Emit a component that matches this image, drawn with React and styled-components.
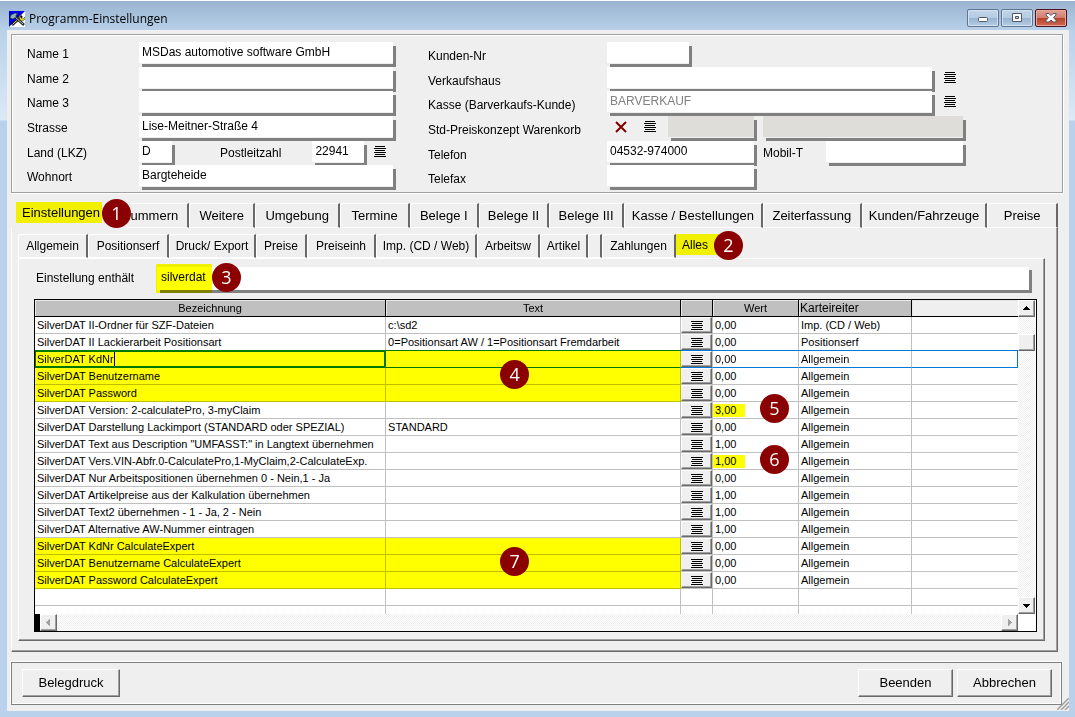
import React, { useState } from 'react';
import styled, { createGlobalStyle, css } from 'styled-components';

const GlobalStyle = createGlobalStyle`
  * {
    box-sizing: border-box;
  }
  body {
    margin: 0;
    background: #efefef;
    font-family: 'Liberation Sans', Arial, sans-serif;
    font-size: 12px;
    color: #000;
  }
  button, input {
    font: inherit;
    color: inherit;
    border-radius: 0;
  }
`;

const rows = [
  { name: 'SilverDAT II-Ordner für SZF-Dateien', text: 'c:\\sd2', value: '0,00', tab: 'Imp. (CD / Web)' },
  { name: 'SilverDAT II Lackierarbeit Positionsart', text: '0=Positionsart AW / 1=Positionsart Fremdarbeit', value: '0,00', tab: 'Positionserf' },
  { name: 'SilverDAT KdNr', value: '0,00', tab: 'Allgemein', marked: true, active: true },
  { name: 'SilverDAT Benutzername', value: '0,00', tab: 'Allgemein', marked: true, textBadge: 4 },
  { name: 'SilverDAT Password', value: '0,00', tab: 'Allgemein', marked: true },
  { name: 'SilverDAT Version: 2-calculatePro, 3-myClaim', value: '3,00', tab: 'Allgemein', valueBadge: 5 },
  { name: 'SilverDAT Darstellung Lackimport (STANDARD oder SPEZIAL)', text: 'STANDARD', value: '0,00', tab: 'Allgemein' },
  { name: 'SilverDAT Text aus Description "UMFASST:" in Langtext übernehmen', value: '1,00', tab: 'Allgemein' },
  { name: 'SilverDAT Vers.VIN-Abfr.0-CalculatePro,1-MyClaim,2-CalculateExp.', value: '1,00', tab: 'Allgemein', valueBadge: 6 },
  { name: 'SilverDAT Nur Arbeitspositionen übernehmen 0 - Nein,1 - Ja', value: '0,00', tab: 'Allgemein' },
  { name: 'SilverDAT Artikelpreise aus der Kalkulation übernehmen', value: '1,00', tab: 'Allgemein' },
  { name: 'SilverDAT Text2 übernehmen - 1 - Ja, 2 - Nein', value: '1,00', tab: 'Allgemein' },
  { name: 'SilverDAT Alternative AW-Nummer eintragen', value: '1,00', tab: 'Allgemein' },
  { name: 'SilverDAT KdNr CalculateExpert', value: '0,00', tab: 'Allgemein', marked: true },
  { name: 'SilverDAT Benutzername CalculateExpert', value: '0,00', tab: 'Allgemein', marked: true, textBadge: 7 },
  { name: 'SilverDAT Password CalculateExpert', value: '0,00', tab: 'Allgemein', marked: true },
];

const mainTabs = [
  { label: 'Nummern', size: 78 },
  { label: 'Weitere', size: 65 },
  { label: 'Umgebung', size: 85 },
  { label: 'Termine', size: 69 },
  { label: 'Belege I', size: 68 },
  { label: 'Belege II', size: 70 },
  { label: 'Belege III', size: 74 },
  { label: 'Kasse / Bestellungen', size: 141 },
  { label: 'Zeiterfassung', size: 99 },
  { label: 'Kunden/Fahrzeuge', size: 127 },
  { label: 'Preise', size: 70 },
];

const subTabs = [
  { label: 'Allgemein', size: 70 },
  { label: 'Positionserf', size: 81 },
  { label: 'Druck/ Export', size: 87 },
  { label: 'Preise', size: 51 },
  { label: 'Preiseinh', size: 69 },
  { label: 'Imp. (CD / Web)', size: 101 },
  { label: 'Arbeitsw', size: 63 },
  { label: 'Artikel', size: 48 },
  { label: '', size: 14 },
  { label: 'Zahlungen', size: 74 },
];

const raised = css`
  border: 1px solid;
  border-color: #fff #696969 #696969 #fff;
  box-shadow: inset -1px -1px 0 #a0a0a0;
`;

const Window = styled.div`
  min-height: 100vh;
  display: flex;
  flex-direction: column;
  padding: 0 6px 6px 7px;
  background: linear-gradient(#99b4d1, #b9d1ea 30px, #dce9f6 119px, #b9d1ea 120px);
  border-top: 1px solid #fff;
`;

const TitleBar = styled.header`
  height: 29px;
  display: flex;
  align-items: center;
  gap: 4px;
  padding: 6px 2px 0;
`;

const Title = styled.h1`
  flex: 1;
  margin: 0;
  font: 12px/16px 'Open Sans', 'Noto Sans', sans-serif;
`;

const WindowButtons = styled.div`
  display: flex;
  gap: 2px;
  align-self: flex-start;
  padding-top: 2px;
`;

const WindowButton = styled.button`
  width: 32px;
  height: 18px;
  padding: 0;
  display: grid;
  place-items: center;
  border: 1px solid ${({ $close }) => ($close ? '#4a1420' : '#5f7590')};
  border-radius: 2px;
  box-shadow: inset 0 0 0 1px ${({ $close }) => ($close ? '#e8a598' : '#d3e1f0')};
  background: ${({ $close }) =>
    $close
      ? 'linear-gradient(#e3a196, #d07d6f 50%, #b8402a 50%, #cf6a50)'
      : 'linear-gradient(#c3d6ea, #b4cbe2 50%, #98b3cf 50%, #b4cde6)'};
`;

const Client = styled.main`
  flex: 1;
  display: flex;
  flex-direction: column;
  padding: 4px 6px 6px 4px;
  background: #efefef;
`;

const AddressPanel = styled.section`
  display: flex;
  height: 159px;
  padding: 7px 15px 0;
  border: 1px solid #a0a0a0;
  box-shadow: inset 1px 1px 0 #fff, 1px 1px 0 #fff;
`;

const FormGrid = styled.div`
  display: grid;
  grid-template-columns: ${({ $labelWidth }) => $labelWidth}px minmax(0, 1fr);
  grid-template-rows: 25px 24px 25px 25px 24px 25px;
  flex: ${({ $wide }) => ($wide ? '1' : '0 1 401px')};
`;

const Label = styled.label`
  padding-top: ${({ $low }) => ($low ? 6 : 4)}px;
  font-size: 12px;
  line-height: 16px;
  white-space: nowrap;
`;

const FieldLine = styled.div`
  display: flex;
  align-items: flex-start;
  padding-right: ${({ $end }) => $end || 0}px;
`;

const Field = styled.input`
  width: ${({ $width }) => ($width ? `${$width}px` : 'auto')};
  flex: ${({ $width }) => ($width ? 'none' : '1')};
  min-width: 0;
  height: 21px;
  padding: 0 3px 1px;
  border: 0;
  outline: 0;
  font-size: 12px;
  background: ${({ disabled }) => (disabled ? '#deddd9' : '#fff')};
  color: ${({ $muted }) => ($muted ? '#808080' : '#000')};
  box-shadow: 0 1px 0 #efefef, 3px 4px 0 #808080;
`;

const IconButton = styled.button`
  width: 12px;
  height: 21px;
  padding: 0;
  border: 0;
  background: none;
  display: grid;
  place-items: center;
`;

const Spacer = styled.span`
  width: ${({ $width }) => $width}px;
`;

const Badge = styled.span`
  position: absolute;
  z-index: 2;
  width: 29px;
  height: 29px;
  border-radius: 50%;
  background: #8b0000;
  color: #fff;
  font: 18px/28px 'Open Sans', 'Noto Sans', sans-serif;
  text-align: center;
`;

const TabBook = styled.section`
  flex: 1;
  display: flex;
  flex-direction: column;
  margin-top: 9px;
  margin-right: 5px;
`;

const TabRow = styled.nav`
  display: flex;
  height: ${({ $sub }) => ($sub ? 24 : 26)}px;
`;

const Tab = styled.button`
  flex: ${({ $size, $sub }) => ($sub ? `0 0 ${$size}px` : `${$size} 1 0`)};
  height: ${({ $sub }) => ($sub ? 24 : 25)}px;
  margin-top: ${({ $sub }) => ($sub ? 0 : 1)}px;
  min-width: 0;
  padding: 0;
  border: 1px solid #fff;
  border-right: 2px solid #696969;
  border-top-left-radius: 3px;
  background: #efefef;
  font-size: ${({ $sub }) => ($sub ? 12 : 13)}px;
  white-space: nowrap;
`;

const MarkedTab = styled.button`
  position: relative;
  flex: none;
  height: 21px;
  width: ${({ $sub }) => ($sub ? 43 : 86)}px;
  margin-left: ${({ $sub }) => ($sub ? 0 : 5)}px;
  margin-right: ${({ $sub }) => ($sub ? 0 : 9)}px;
  padding: 0 6px;
  border: 0;
  background: #f0f000;
  font-size: ${({ $sub }) => ($sub ? 12 : 13)}px;
  text-align: left;
`;

const TabBadge = styled(Badge)`
  top: -3px;
  left: ${({ $sub }) => ($sub ? 38 : 86)}px;
`;

const Page = styled.div`
  flex: 1;
  display: flex;
  flex-direction: column;
  border-left: 1px solid #fff;
  border-right: 1px solid #696969;
  border-bottom: 1px solid #696969;
  box-shadow: inset -1px -1px 0 #a0a0a0;
`;

const OuterPage = styled(Page)`
  padding: 6px 12px 10px 6px;
`;

const InnerPage = styled(Page)`
  border-top: 1px solid #fff;
  padding: 8px 7px 8px 15px;
`;

const SearchLine = styled.div`
  display: flex;
  height: 32px;
  padding-right: 8px;
`;

const SearchLabel = styled.label`
  width: 123px;
  padding: 3px 2px 0;
  font-size: 12px;
  line-height: 16px;
`;

const SearchWrap = styled.div`
  position: relative;
  flex: 1;
  display: flex;
  align-items: flex-start;

  input {
    height: 23px;
    padding: 0 4px 3px;
    box-shadow: 3px 3px 0 #808080;
  }
`;

const SearchMark = styled.span`
  position: absolute;
  left: -1px;
  top: -3px;
  width: 56px;
  height: 29px;
  background: #ff0;
  mix-blend-mode: multiply;
  pointer-events: none;
`;

const SearchBadge = styled(Badge)`
  left: 55px;
  top: -4px;
`;

const GridFrame = styled.div`
  display: grid;
  grid-template-columns: minmax(0, 1fr) 17px;
  grid-template-rows: 314px 17px;
  padding-right: 1px;
  border: 1px solid #000;
  background: #fff;
`;

const TableArea = styled.div`
  overflow: hidden;
`;

const Table = styled.table`
  width: 100%;
  table-layout: fixed;
  border-collapse: separate;
  border-spacing: 0;
  font-size: 11px;
`;

const TextCol = styled.col`
  width: 30%;
`;

const Th = styled.th`
  height: 17px;
  padding: 0 1px;
  border-right: 1px solid #000;
  border-bottom: 1px solid #000;
  background: ${({ $blank }) => ($blank ? '#efefef' : '#c0c0c0')};
  box-shadow: inset 1px 1px 0 #e8e8e8;
  font-weight: 400;
  font-size: ${({ $left }) => ($left ? 12 : 11)}px;
  line-height: 16px;
  text-align: ${({ $left }) => ($left ? 'left' : 'center')};

  &:last-child {
    border-right: 0;
  }
`;

const Td = styled.td`
  position: relative;
  height: 17px;
  padding: 0 2px;
  border-right: 1px solid #c0c0c0;
  border-bottom: 1px solid #c0c0c0;
  line-height: 16px;
  white-space: nowrap;
  background: #fff;
  ${({ $marked }) =>
    $marked &&
    css`
      background: #ff0;
      border-color: #c0c000;
    `}

  &:last-child {
    border-right-color: #fff;
  }
`;

const Tr = styled.tr`
  ${({ $active }) =>
    $active &&
    css`
      ${Td} {
        border-bottom-color: #0078d7;
        box-shadow: 0 -1px 0 #0078d7;
      }
      ${Td}:nth-child(1) {
        border-color: #007800;
        box-shadow: inset 1px 1px 0 #007800, inset -1px -1px 0 #007800, 0 -1px 0 #007800;
      }
      ${Td}:nth-child(2) {
        border-bottom-color: #007800;
        box-shadow: 0 -1px 0 #007800;
      }
      ${Td}:last-child {
        border-right-color: #0078d7;
      }
    `}
`;

const CellInput = styled.input`
  field-sizing: content;
  display: block;
  height: 14px;
  padding: 0;
  border: 0;
  border-right: 1px solid #000;
  outline: 0;
  background: none;
`;

const ButtonTd = styled(Td)`
  padding: 0;
`;

const RowButton = styled.button`
  display: grid;
  place-items: center;
  width: 100%;
  height: 16px;
  padding: 0;
  background: #efefef;
  ${raised}
`;

const ValueMark = styled.mark`
  display: block;
  width: 32px;
  height: 13px;
  margin-left: -2px;
  padding-left: 2px;
  line-height: 13px;
  background: #ff0;
  color: #000;
`;

const TextBadge = styled(Badge)`
  left: 114px;
  top: -8px;
`;

const ValueBadge = styled(Badge)`
  left: 47px;
  top: -8px;
`;

const dither = css`
  background: repeating-conic-gradient(#fff 0 25%, #efefef 0 50%) 0 0 / 2px 2px;
`;

const VScroll = styled.div`
  display: flex;
  flex-direction: column;
  ${dither}
`;

const HScroll = styled.div`
  display: flex;
  justify-content: space-between;
  border-left: 5px solid #000;
  ${dither}
`;

const ScrollButton = styled.button`
  width: 17px;
  height: 17px;
  padding: 0;
  display: grid;
  place-items: center;
  background: #efefef;
  ${raised}
`;

const Thumb = styled.div`
  height: 17px;
  margin: 17px 0 auto;
  background: #efefef;
  ${raised}
`;

const Footer = styled.footer`
  position: relative;
  display: flex;
  align-items: center;
  gap: 4px;
  height: 43px;
  margin-top: 10px;
  padding: 0 9px 2px 10px;
  margin-right: 1px;
  border: 1px solid #808080;
  box-shadow: inset -1px -1px 0 #fff, -1px -1px 0 #fff;
`;

const FooterButton = styled.button`
  width: ${({ $first }) => ($first ? 98 : 95)}px;
  height: 28px;
  margin-right: ${({ $first }) => ($first ? 'auto' : '0')};
  padding: 0;
  background: #efefef;
  font-size: 13px;
  ${raised}
`;

const Grip = styled.svg`
  position: absolute;
  right: -8px;
  bottom: -6px;
`;

const ListIcon = () => (
  <svg width="12" height="11" shapeRendering="crispEdges" aria-hidden="true">
    <path d="M1 .5h10M0 2.5h12M1 4.5h10M0 6.5h12M1 8.5h10M0 10.5h12" stroke="#000" />
  </svg>
);

const RowIcon = () => (
  <svg width="12" height="10" shapeRendering="crispEdges" aria-hidden="true">
    <path d="M0 1.5h12M1 3.5h10M0 5.5h12M1 7.5h10M0 9.5h12" stroke="#000" />
  </svg>
);

const Arrow = ({ d, color = '#000' }) => (
  <svg width="9" height="9" shapeRendering="crispEdges" aria-hidden="true">
    <path d={d} fill={color} />
  </svg>
);

const AppIcon = () => (
  <svg width="16" height="16" aria-hidden="true">
    <path d="M0 0h16v16H0z" fill="#fff" />
    <path d="M0 0h16L0 16z" fill="#0000e8" />
    <path d="M3 14L13 5" stroke="#111" strokeWidth="2.6" />
    <path d="M3.500 13.500L10 7.500" stroke="#f0e850" strokeWidth="1" />
    <path d="M5 5l10 9" stroke="#222" strokeWidth="2.6" />
    <path d="M6 6l8 7" stroke="#a8c4c0" strokeWidth="1" />
    <path d="M1 7l1-3 4-2 3 1-2 1v2L4 8z" fill="#8fb8b0" stroke="#234" strokeWidth=".6" />
    <path d="M12 3l-1 2 1 2 2 1 2-2v2l-2 2-3-1-1-3 1-2z" fill="#f0e020" stroke="#222" strokeWidth=".5" />
  </svg>
);

const AddressForm = () => (
  <AddressPanel>
    <FormGrid $labelWidth={112}>
      <Label htmlFor="name1">Name 1</Label>
      <FieldLine><Field id="name1" $width={254} defaultValue="MSDas automotive software GmbH" /></FieldLine>
      <Label htmlFor="name2">Name 2</Label>
      <FieldLine><Field id="name2" $width={254} /></FieldLine>
      <Label htmlFor="name3">Name 3</Label>
      <FieldLine><Field id="name3" $width={254} /></FieldLine>
      <Label htmlFor="street">Strasse</Label>
      <FieldLine><Field id="street" $width={254} defaultValue="Lise-Meitner-Straße 4" /></FieldLine>
      <Label htmlFor="country">Land (LKZ)</Label>
      <FieldLine>
        <Field id="country" $width={33} defaultValue="D" />
        <Spacer $width={48} />
        <Label htmlFor="zip">Postleitzahl</Label>
        <Spacer $width={31} />
        <Field id="zip" $width={52} defaultValue="22941" />
        <Spacer $width={10} />
        <IconButton type="button" aria-label="Postleitzahl wählen"><ListIcon /></IconButton>
      </FieldLine>
      <Label htmlFor="city">Wohnort</Label>
      <FieldLine><Field id="city" $width={254} defaultValue="Bargteheide" /></FieldLine>
    </FormGrid>
    <FormGrid $labelWidth={179} $wide>
      <Label $low htmlFor="customer">Kunden-Nr</Label>
      <FieldLine><Field id="customer" $width={82} /></FieldLine>
      <Label $low htmlFor="branch">Verkaufshaus</Label>
      <FieldLine $end={91}>
        <Field id="branch" />
        <Spacer $width={12} />
        <IconButton type="button" aria-label="Verkaufshaus wählen"><ListIcon /></IconButton>
      </FieldLine>
      <Label $low htmlFor="till">Kasse (Barverkaufs-Kunde)</Label>
      <FieldLine $end={91}>
        <Field id="till" $muted defaultValue="BARVERKAUF" />
        <Spacer $width={12} />
        <IconButton type="button" aria-label="Kasse wählen"><ListIcon /></IconButton>
      </FieldLine>
      <Label $low htmlFor="price">Std-Preiskonzept Warenkorb</Label>
      <FieldLine $end={84}>
        <Spacer $width={8} />
        <IconButton type="button" aria-label="Preiskonzept löschen">
          <svg width="12" height="12" aria-hidden="true">
            <path d="M1 1l10 10M11 1L1 11" stroke="#800000" strokeWidth="2" />
          </svg>
        </IconButton>
        <Spacer $width={17} />
        <IconButton type="button" aria-label="Preiskonzept wählen"><ListIcon /></IconButton>
        <Spacer $width={12} />
        <Field id="price" $width={86} disabled />
        <Spacer $width={9} />
        <Field aria-label="Bezeichnung Preiskonzept" disabled />
      </FieldLine>
      <Label $low htmlFor="phone">Telefon</Label>
      <FieldLine $end={84}>
        <Field id="phone" $width={147} defaultValue="04532-974000" />
        <Spacer $width={9} />
        <Label htmlFor="mobile">Mobil-T</Label>
        <Spacer $width={23} />
        <Field id="mobile" />
      </FieldLine>
      <Label $low htmlFor="fax">Telefax</Label>
      <FieldLine><Field id="fax" $width={147} /></FieldLine>
    </FormGrid>
  </AddressPanel>
);

const SettingsRow = ({ row }) => (
  <Tr $active={row.active}>
    <Td $marked={row.marked}>
      {row.active ? <CellInput aria-label="Bezeichnung" defaultValue={row.name} /> : row.name}
    </Td>
    <Td $marked={row.marked}>
      {row.text}
      {row.textBadge && <TextBadge>{row.textBadge}</TextBadge>}
    </Td>
    <ButtonTd>
      <RowButton type="button" aria-label={`${row.name} bearbeiten`}><RowIcon /></RowButton>
    </ButtonTd>
    <Td>
      {row.valueBadge ? <ValueMark>{row.value}</ValueMark> : row.value}
      {row.valueBadge && <ValueBadge>{row.valueBadge}</ValueBadge>}
    </Td>
    <Td>{row.tab}</Td>
    <Td />
  </Tr>
);

const SettingsTable = () => (
  <GridFrame>
    <TableArea>
      <Table>
        <colgroup>
          <col />
          <TextCol />
          <col width="32" />
          <col width="86" />
          <col width="113" />
          <col width="106" />
        </colgroup>
        <thead>
          <tr>
            <Th>Bezeichnung</Th>
            <Th>Text</Th>
            <Th />
            <Th>Wert</Th>
            <Th $left>Karteireiter</Th>
            <Th $blank />
          </tr>
        </thead>
        <tbody>
          {rows.map((row) => (
            <SettingsRow key={row.name} row={row} />
          ))}
          {[1, 2].map((n) => (
            <tr key={n}>
              <Td /><Td /><Td /><Td /><Td /><Td />
            </tr>
          ))}
        </tbody>
      </Table>
    </TableArea>
    <VScroll>
      <ScrollButton type="button" aria-label="Nach oben"><Arrow d="M4 2h1v1h1v1h1v1h1v1H1V5h1V4h1V3h1z" /></ScrollButton>
      <Thumb />
      <ScrollButton type="button" aria-label="Nach unten"><Arrow d="M1 3h7v1H7v1H6v1H5v1H4V6H3V5H2V4H1z" /></ScrollButton>
    </VScroll>
    <HScroll>
      <ScrollButton type="button" aria-label="Nach links"><Arrow color="#a0a0a0" d="M6 1v7H5V7H4V6H3V5H2V4h1V3h1V2h1V1z" /></ScrollButton>
      <ScrollButton type="button" aria-label="Nach rechts"><Arrow color="#a0a0a0" d="M3 1v7h1V7h1V6h1V5h1V4H6V3H5V2H4V1z" /></ScrollButton>
    </HScroll>
  </GridFrame>
);

const App = () => {
  const [search, setSearch] = useState('silverdat');

  return (
    <>
      <GlobalStyle />
      <Window>
        <TitleBar>
          <AppIcon />
          <Title>Programm-Einstellungen</Title>
          <WindowButtons>
            <WindowButton type="button" aria-label="Minimieren">
              <svg width="12" height="10" aria-hidden="true">
                <rect x="1.5" y="4.5" width="9" height="4" rx="1" fill="#fff" stroke="#535666" />
              </svg>
            </WindowButton>
            <WindowButton type="button" aria-label="Maximieren">
              <svg width="12" height="10" aria-hidden="true">
                <path d="M1.5.5h9v8h-9zM4.500 3.500v2h3v-2z" fill="#fff" fillRule="evenodd" stroke="#535666" />
              </svg>
            </WindowButton>
            <WindowButton type="button" aria-label="Schließen" $close>
              <svg width="12" height="10" aria-hidden="true">
                <path d="M1 .5h3l2 2 2-2h3v1.500L8.500 4.500 11 7.500V9H8L6 7 4 9H1V7.500L3.500 4.500 1 2z" fill="#fff" stroke="#535666" />
              </svg>
            </WindowButton>
          </WindowButtons>
        </TitleBar>
        <Client>
          <AddressForm />
          <TabBook>
            <TabRow>
              <MarkedTab type="button">
                Einstellungen
                <TabBadge>1</TabBadge>
              </MarkedTab>
              {mainTabs.map((tab) => (
                <Tab key={tab.label} type="button" $size={tab.size}>{tab.label}</Tab>
              ))}
            </TabRow>
            <OuterPage>
              <TabRow $sub>
                {subTabs.map((tab) => (
                  <Tab key={tab.label} type="button" $sub $size={tab.size}>{tab.label}</Tab>
                ))}
                <MarkedTab type="button" $sub>
                  Alles
                  <TabBadge $sub>2</TabBadge>
                </MarkedTab>
              </TabRow>
              <InnerPage>
                <SearchLine>
                  <SearchLabel htmlFor="search">Einstellung enthält</SearchLabel>
                  <SearchWrap>
                    <Field id="search" value={search} onChange={(event) => setSearch(event.target.value)} />
                    <SearchMark />
                    <SearchBadge>3</SearchBadge>
                  </SearchWrap>
                </SearchLine>
                <SettingsTable />
              </InnerPage>
            </OuterPage>
          </TabBook>
          <Footer>
            <FooterButton type="button" $first>Belegdruck</FooterButton>
            <FooterButton type="button">Beenden</FooterButton>
            <FooterButton type="button">Abbrechen</FooterButton>
            <Grip width="12" height="12" aria-hidden="true">
              <path d="M0 12L12 0M4 12l8-8M8 12l4-4" stroke="#a0a0a0" strokeWidth="1.5" />
            </Grip>
          </Footer>
        </Client>
      </Window>
    </>
  );
};

export default App;
